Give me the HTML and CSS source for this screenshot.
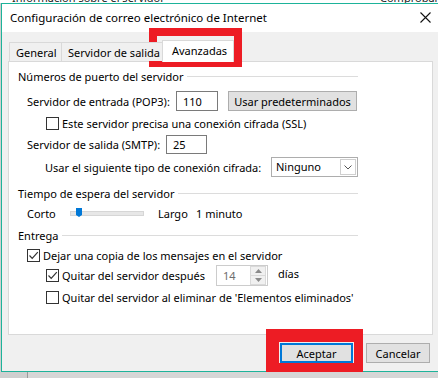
FILE: index.html
```html
<!DOCTYPE html>
<html lang="es">
<head>
  <meta charset="UTF-8">
  <title>Configuración de correo electrónico de Internet</title>
  <link rel="stylesheet" href="styles.css">
</head>
<body>

  <!-- ventana de fondo (solo asoma por arriba) -->
  <div class="backdrop-top">
    <span class="bg-text">Información sobre el servidor</span>
    <span class="bg-text right">Comprobar</span>
  </div>

  <div class="dialog">
    <div class="titlebar">
      <span class="title">Configuración de correo electrónico de Internet</span>
      <svg class="close" width="11" height="11" viewBox="0 0 11 11"><path d="M0.5 0.5 L10.5 10.5 M10.5 0.5 L0.5 10.5" stroke="#111" stroke-width="1.1" fill="none"/></svg>
    </div>

    <div class="dialog-body">
      <div class="tabs">
        <div class="tab tab-general">General</div>
        <div class="tab tab-salida">Servidor de salida</div>
        <div class="tab active">Avanzadas</div>
      </div>

      <div class="panel">
        <div class="group-head"><span>Números de puerto del servidor</span><i></i></div>

        <div class="row row-pop3">
          <span class="label w-pop3">Servidor de entrada (POP3):</span>
          <div class="textbox w42">110</div>
          <button class="btn btn-default">Usar predeterminados</button>
        </div>

        <div class="row check-row indent2">
          <span class="check"></span>
          <span>Este servidor precisa una conexión cifrada (SSL)</span>
        </div>

        <div class="row row-smtp">
          <span class="label w-smtp">Servidor de salida (SMTP):</span>
          <div class="textbox w41">25</div>
        </div>

        <div class="row row-conn">
          <span class="label w-conn">Usar el siguiente tipo de conexión cifrada:</span>
          <div class="select">
            <span>Ninguno</span>
            <span class="select-arrow">
              <svg width="8" height="5" viewBox="0 0 8 5"><path d="M0.5 0.5 L4 4 L7.5 0.5" stroke="#555" fill="none"/></svg>
            </span>
          </div>
        </div>

        <div class="group-head gap-8"><span>Tiempo de espera del servidor</span><i></i></div>

        <div class="row row-slider">
          <span class="label w-corto">Corto</span>
          <div class="slider">
            <div class="track"></div>
            <svg class="thumb" width="6" height="9" viewBox="0 0 6 9"><path d="M0 0 H6 V7 L3 9 L0 7 Z" fill="#0078d7"/></svg>
          </div>
          <span class="label w-largo">Largo</span>
          <span>1 minuto</span>
        </div>

        <div class="group-head gap-6"><span>Entrega</span><i></i></div>

        <div class="row check-row indent1 gap-5">
          <span class="check checked">
            <svg width="11" height="11" viewBox="0 0 11 11"><path d="M1.5 5.5 L4.2 8.3 L9.8 2.2" stroke="#333" stroke-width="1.2" fill="none"/></svg>
          </span>
          <span>Dejar una copia de los mensajes en el servidor</span>
        </div>

        <div class="row check-row row-spin indent2">
          <span class="check checked">
            <svg width="11" height="11" viewBox="0 0 11 11"><path d="M1.5 5.5 L4.2 8.3 L9.8 2.2" stroke="#333" stroke-width="1.2" fill="none"/></svg>
          </span>
          <span class="w-quitar">Quitar del servidor después</span>
          <div class="spin">
            <span class="spin-value">14</span>
            <span class="spin-btns">
              <span class="spin-btn"><svg width="7" height="4" viewBox="0 0 7 4"><path d="M0 4 L3.5 0 L7 4 Z" fill="#8a8a8a"/></svg></span>
              <span class="spin-btn"><svg width="7" height="4" viewBox="0 0 7 4"><path d="M0 0 L3.5 4 L7 0 Z" fill="#8a8a8a"/></svg></span>
            </span>
          </div>
          <span class="dias">días</span>
        </div>

        <div class="row check-row indent2 gap-2">
          <span class="check"></span>
          <span>Quitar del servidor al eliminar de 'Elementos eliminados'</span>
        </div>
      </div>

      <div class="footer">
        <button class="btn btn-ok">Aceptar</button>
        <button class="btn btn-cancel">Cancelar</button>
      </div>
    </div>
  </div>

  <div class="backdrop-bottom"></div>

  <!-- marcas rojas del tutorial -->
  <div class="mark mark-tab"></div>
  <div class="mark mark-ok"></div>

</body>
</html>
```

FILE: styles.css
```css
:root {
  --teal: #1db39a;
  --dlg-bg: #f0f0f0;
  --line: #d9d9d9;
  --btn-bg: #e1e1e1;
  --btn-border: #adadad;
  --mark: #ed1c24;
  --text: #000;
}

body {
  margin: 0;
  width: 438px;
  height: 378px;
  overflow: hidden;
  position: relative;
  background-color: #cfcfcf;
  font-family: "Noto Sans", "Open Sans", sans-serif;
  font-size: 11px;
  color: var(--text);
}

/* ventana de detras */
.backdrop-top {
  height: 3px;
  overflow: hidden;
  position: relative;
  background-color: #fff;
}

.bg-text {
  position: absolute;
  top: -10px;
  left: 12px;
  color: #222;
  white-space: nowrap;
}

.bg-text.right {
  left: 380px;
}

.backdrop-bottom {
  height: 6px;
  margin-left: 27px;
  border-left: 1px solid #9a9a9a;
  background-color: #d6d6d6;
}

/* dialogo */
.dialog {
  width: 450px;
  margin-left: 1px;
  border-top: 1px solid var(--teal);
  border-left: 1px solid var(--teal);
  border-bottom: 1px solid var(--teal);
}

.titlebar {
  height: 28px;
  background-color: #fff;
  display: flex;
  align-items: center;
  padding-left: 8px;
}

.title {
  flex: 1;
  font-size: 11.5px;
  padding-bottom: 2px;
}

.close {
  margin-right: 21px;
  margin-bottom: 2px;
}

.dialog-body {
  height: 339px;
  background-color: var(--dlg-bg);
  padding-top: 8px;
  box-sizing: border-box;
}

/* pestanas */
.tabs {
  display: flex;
  align-items: flex-end;
  height: 22px;
  margin-left: 7px;
  margin-bottom: -1px;
  position: relative;
  z-index: 1;
}

.tab {
  height: 19px;
  margin-bottom: 1px;
  box-sizing: border-box;
  border: 1px solid var(--line);
  border-bottom: none;
  background-color: var(--dlg-bg);
  display: flex;
  align-items: center;
  padding-left: 6px;
  white-space: nowrap;
}

.tab-general {
  width: 53px;
}

.tab-salida {
  width: 102px;
  border-left: none;
}

.tab.active {
  height: 22px;
  margin-bottom: 0;
  width: 72px;
  margin-left: -2px;
  background-color: #fff;
  padding-left: 9px;
  padding-bottom: 2px;
}

.panel {
  width: 425px;
  height: 274px;
  margin-left: 6px;
  box-sizing: border-box;
  border: 1px solid var(--line);
  background-color: #fff;
  padding: 6px 0 0 9px;
}

/* grupos */
.group-head {
  width: 340px;
  height: 16px;
  display: flex;
  align-items: center;
}

.group-head i {
  flex: 1;
  height: 1px;
  margin-left: 4px;
  background-color: #dcdcdc;
}

.gap-8 { margin-top: 8px; }
.gap-6 { margin-top: 6px; }
.gap-5 { margin-top: 5px; }
.gap-2 { margin-top: 2px; }

.row {
  display: flex;
  align-items: center;
  white-space: nowrap;
  padding-left: 9px;
}

.indent1 { padding-left: 9px; }
.indent2 { padding-left: 28px; }

.row-pop3 {
  height: 20px;
  margin-top: 7px;
}

.check-row {
  height: 16px;
  margin-top: 4px;
}

.row-smtp {
  height: 19px;
  margin-top: 4px;
}

.row-conn {
  height: 20px;
  margin-top: 3px;
  padding-left: 27px;
}

.row-slider {
  height: 16px;
  margin-top: 4px;
}

.row-spin {
  height: 20px;
  margin-top: 2px;
}

.label {
  display: inline-block;
  flex-shrink: 0;
}

.w-pop3 { width: 149px; }
.w-smtp { width: 139px; }
.w-conn { width: 226px; }
.w-corto { width: 43px; }
.w-largo { width: 38px; }
.w-quitar { width: 154px; }

/* controles */
.textbox {
  height: 20px;
  box-sizing: border-box;
  border: 1px solid #7a7a7a;
  background-color: #fff;
  padding-left: 6px;
  display: flex;
  align-items: center;
}

.w42 { width: 42px; }
.w41 { width: 41px; height: 19px; }

.btn {
  font-family: inherit;
  font-size: 11px;
  color: var(--text);
  background-color: var(--btn-bg);
  border: 1px solid var(--btn-border);
  box-sizing: border-box;
  padding: 0;
  height: 20px;
}

.btn-default {
  width: 129px;
  height: 20px;
  margin-left: 10px;
}

.select {
  width: 87px;
  height: 20px;
  box-sizing: border-box;
  border: 1px solid #adadad;
  background-color: #fff;
  display: flex;
  align-items: center;
  padding-left: 4px;
}

.select span:first-child {
  flex: 1;
  padding-bottom: 2px;
}

.select-arrow {
  width: 16px;
  height: 16px;
  margin-right: 1px;
  box-sizing: border-box;
  border: 1px solid #cfcfcf;
  display: flex;
  align-items: center;
  justify-content: center;
}

.check {
  width: 13px;
  height: 13px;
  box-sizing: border-box;
  border: 1px solid #333;
  background-color: #fff;
  margin-right: 3px;
  flex-shrink: 0;
  display: flex;
  align-items: center;
  justify-content: center;
}

.slider {
  width: 74px;
  height: 16px;
  position: relative;
  margin-right: 14px;
}

.track {
  position: absolute;
  top: 6px;
  left: 0;
  right: 0;
  height: 3px;
  background-color: #e7e7e7;
  border: 1px solid #d6d6d6;
}

.thumb {
  position: absolute;
  top: 3px;
  left: 6px;
}

.spin {
  width: 52px;
  height: 21px;
  box-sizing: border-box;
  border: 1px solid #cccccc;
  background-color: #fff;
  display: flex;
  align-items: center;
}

.spin-value {
  flex: 1;
  padding-left: 6px;
  color: #6d6d6d;
}

.spin-btns {
  width: 16px;
  height: 19px;
  display: flex;
  flex-direction: column;
  margin-right: 1px;
}

.spin-btn {
  flex: 1;
  display: flex;
  align-items: center;
  justify-content: center;
  background-color: #f0f0f0;
  border: 1px solid #d9d9d9;
}

.spin-btn + .spin-btn {
  border-top: none;
}

.dias {
  margin-left: 10px;
  padding-bottom: 3px;
}

/* botones inferiores */
.footer {
  display: flex;
  padding-left: 278px;
  margin-top: 8px;
}

.btn-ok {
  width: 73px;
  border: 2px solid #0078d7;
}

.btn-cancel {
  width: 64px;
  margin-left: 13px;
}

/* recuadros rojos */
.mark {
  position: absolute;
  box-sizing: border-box;
  border: 8px solid var(--mark);
}

.mark-tab {
  left: 149px;
  top: 28px;
  width: 93px;
  height: 39px;
}

.mark-ok {
  left: 266px;
  top: 329px;
  width: 97px;
  height: 43px;
  border-width: 13px 9px 9px 13px;
}
```
